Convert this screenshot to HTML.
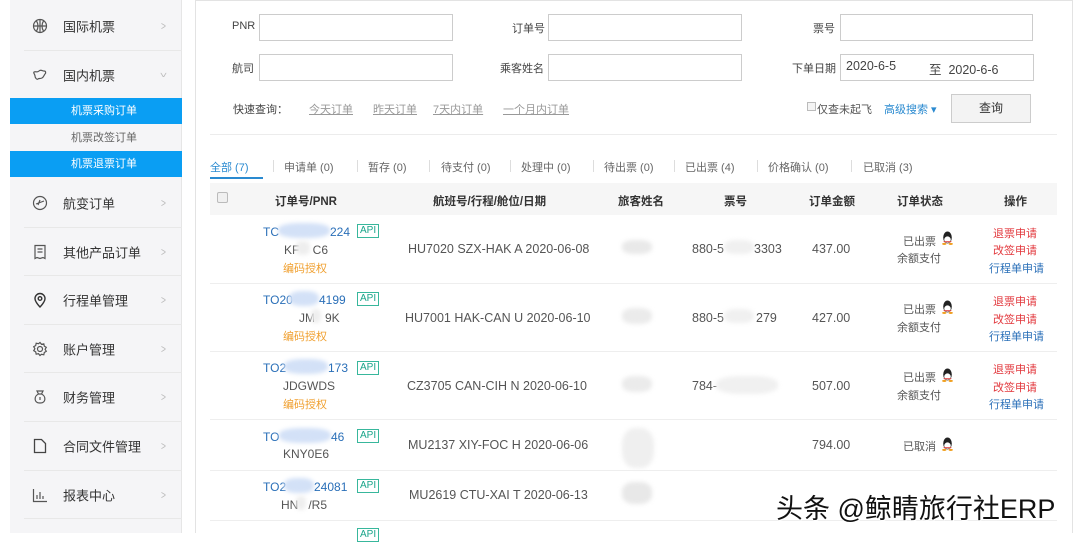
<!DOCTYPE html>
<html><head><meta charset="utf-8">
<style>
*{margin:0;padding:0;box-sizing:border-box}
body{width:1080px;height:533px;overflow:hidden;background:#fff;font-family:"Liberation Sans","Noto Sans CJK SC",sans-serif;font-size:12px;color:#555;position:relative}
.a{position:absolute;white-space:nowrap}
#side{position:absolute;left:10px;top:0;width:172px;height:533px;background:#f5f5f7;border-right:1px solid #e6e6e6}
.mi{position:absolute;left:0;width:172px;height:49px;font-size:13px;color:#333}
.mi .t{position:absolute;left:53px;top:50%;transform:translateY(-50%)}
.mi .ar{position:absolute;left:150px;top:50%;transform:translateY(-50%) scaleX(.7);color:#bbb;font-size:12px}
.mi svg{position:absolute;left:22px;top:50%;transform:translateY(-50%)}
.sep{position:absolute;left:14px;width:158px;height:1px;background:#e8e8e8}
.sub{position:absolute;left:0;width:172px;height:26px;line-height:26px;font-size:11px;color:#666;padding-left:61px}
.sub.on{background:#0a9ef3;color:#fff}
.inp{position:absolute;height:27px;border:1px solid #ccc;background:#fff}
.lb{position:absolute;font-size:11px;color:#444}
.ql{position:absolute;font-size:11px;color:#999;text-decoration:underline;top:101px}
.tab{position:absolute;top:159px;font-size:11px;color:#666}
.tsep{position:absolute;top:160px;width:1px;height:12px;background:#ddd}
.th{position:absolute;top:193px;font-size:11.5px;color:#333;font-weight:bold}
.hl{position:absolute;left:210px;width:847px;height:1px;background:#eee}
.api{position:absolute;font-size:10px;color:#1aa58a;border:1px solid #38b79c;padding:0 2px;line-height:12px}
.blue{color:#2a6fb8}
.or{color:#f0a030;font-size:11px}
.red{color:#e2383d;font-size:11px}
.lk{color:#2a6fb8;font-size:11px}
.blob{position:absolute;border-radius:40%;filter:blur(2px)}
.qq{position:absolute;width:11px;height:14px}
.r{font-size:12.5px}
</style></head><body>

<div id="side">
  <div class="mi" style="top:1px"><svg width="16" height="16" viewBox="0 0 16 16" fill="none" stroke="#555" stroke-width="1.2"><circle cx="8" cy="8" r="6.5"/><path d="M1.5 8h13M8 1.5v13M4.5 3c2 3 2 7 0 10M11.5 3c-2 3-2 7 0 10"/></svg><span class="t">国际机票</span><span class="ar">&gt;</span></div>
  <div class="sep" style="top:50px"></div>
  <div class="mi" style="top:50px"><svg width="16" height="16" viewBox="0 0 16 16" fill="none" stroke="#555" stroke-width="1.2"><path d="M2 5c2-1 3 1 5-1s3 0 5 0 2 2 1 3-1 3-3 4-3 0-4 1-3-1-3-3-2-3-1-4z"/></svg><span class="t">国内机票</span><span class="ar" style="transform:translateY(-50%) rotate(90deg) scaleX(.7)">&gt;</span></div>
  <div class="sub on" style="top:98px">机票采购订单</div>
  <div class="sub" style="top:125px">机票改签订单</div>
  <div class="sub on" style="top:151px">机票退票订单</div>
  <div class="mi" style="top:178px"><svg width="16" height="16" viewBox="0 0 16 16" fill="none" stroke="#555" stroke-width="1.2"><circle cx="8" cy="8" r="6.5"/><path d="M4 9l8-3M6 10l2-5"/></svg><span class="t">航变订单</span><span class="ar">&gt;</span></div>
  <div class="sep" style="top:227px"></div>
  <div class="mi" style="top:227px"><svg width="16" height="16" viewBox="0 0 16 16" fill="none" stroke="#555" stroke-width="1.2"><path d="M3 1.5h10v13l-2-1-3 1-3-1-2 1z"/><path d="M5.5 5h5M5.5 8h5"/></svg><span class="t">其他产品订单</span><span class="ar">&gt;</span></div>
  <div class="sep" style="top:275px"></div>
  <div class="mi" style="top:275px"><svg width="16" height="16" viewBox="0 0 16 16" fill="none" stroke="#333" stroke-width="1.4"><path d="M8 15s5-5 5-8.5a5 5 0 0 0-10 0C3 10 8 15 8 15z"/><circle cx="8" cy="6.5" r="1.8"/></svg><span class="t">行程单管理</span><span class="ar">&gt;</span></div>
  <div class="sep" style="top:324px"></div>
  <div class="mi" style="top:324px"><svg width="16" height="16" viewBox="0 0 16 16" fill="none" stroke="#555" stroke-width="1.2"><circle cx="8" cy="8" r="2.5"/><path d="M8 1.5l1.5 1.8 2.3-.5.5 2.3 2 1.2-1.2 2 1.2 2-2 1.2-.5 2.3-2.3-.5L8 14.5l-1.5-1.8-2.3.5-.5-2.3-2-1.2 1.2-2-1.2-2 2-1.2.5-2.3 2.3.5z"/></svg><span class="t">账户管理</span><span class="ar">&gt;</span></div>
  <div class="sep" style="top:372px"></div>
  <div class="mi" style="top:372px"><svg width="16" height="16" viewBox="0 0 16 16" fill="none" stroke="#555" stroke-width="1.2"><path d="M5 2h6l-1.5 3h-3zM6.5 5C2 7 1.5 14 8 14s6-7 1.5-9"/><path d="M8 8v3"/></svg><span class="t">财务管理</span><span class="ar">&gt;</span></div>
  <div class="sep" style="top:421px"></div>
  <div class="mi" style="top:421px"><svg width="16" height="16" viewBox="0 0 16 16" fill="none" stroke="#444" stroke-width="1.3"><path d="M2.5 1.5h7l4 4v9h-11z"/></svg><span class="t">合同文件管理</span><span class="ar">&gt;</span></div>
  <div class="sep" style="top:470px"></div>
  <div class="mi" style="top:470px"><svg width="16" height="16" viewBox="0 0 16 16" fill="none" stroke="#555" stroke-width="1.2"><path d="M1.5 2v12.5H15M5 12V8M8 12V5M11 12V9"/></svg><span class="t">报表中心</span><span class="ar">&gt;</span></div>
  <div class="sep" style="top:518px"></div>
</div>

<div class="a" style="left:195px;top:0;width:878px;height:533px;border-left:1px solid #e3e3e3;border-right:1px solid #e3e3e3;border-top:1px solid #e3e3e3"></div>

<div class="lb" style="left:232px;top:20px">PNR</div><div class="inp" style="left:259px;top:14px;width:194px"></div>
<div class="lb" style="left:512px;top:20px">订单号</div><div class="inp" style="left:548px;top:14px;width:194px"></div>
<div class="lb" style="left:813px;top:20px">票号</div><div class="inp" style="left:840px;top:14px;width:193px"></div>
<div class="lb" style="left:232px;top:60px">航司</div><div class="inp" style="left:259px;top:54px;width:194px"></div>
<div class="lb" style="left:500px;top:60px">乘客姓名</div><div class="inp" style="left:548px;top:54px;width:194px"></div>
<div class="lb" style="left:792px;top:60px">下单日期</div><div class="inp" style="left:840px;top:54px;width:194px"></div>
<div class="a" style="left:846px;top:59px;font-size:12.5px;color:#444">2020-6-5</div>
<div class="a" style="left:929px;top:59px;font-size:12.5px;color:#444">至&nbsp; 2020-6-6</div>
<div class="lb" style="left:233px;top:101px">快速查询：</div>
<div class="ql" style="left:309px">今天订单</div><div class="ql" style="left:373px">昨天订单</div><div class="ql" style="left:433px">7天内订单</div><div class="ql" style="left:503px">一个月内订单</div>
<div class="a" style="left:807px;top:102px;width:9px;height:9px;border:1px solid #bbb;background:#f4f4f4"></div>
<div class="lb" style="left:817px;top:101px;color:#555">仅查未起飞</div>
<div class="lb" style="left:884px;top:101px;color:#2a8ad0">高级搜索 ▾</div>
<div class="a" style="left:951px;top:94px;width:80px;height:29px;border:1px solid #ccc;background:#f3f3f3;text-align:center;line-height:27px;font-size:12px;color:#333">查询</div>
<div class="a" style="left:210px;top:134px;width:847px;height:1px;background:#ececec"></div>

<div class="tab" style="left:210px;color:#2a8ad0">全部 (7)</div>
<div class="a" style="left:210px;top:177px;width:53px;height:2px;background:#2a8ad0"></div>
<div class="tsep" style="left:273px"></div><div class="tab" style="left:284px">申请单 (0)</div>
<div class="tsep" style="left:357px"></div><div class="tab" style="left:368px">暂存 (0)</div>
<div class="tsep" style="left:429px"></div><div class="tab" style="left:441px">待支付 (0)</div>
<div class="tsep" style="left:510px"></div><div class="tab" style="left:521px">处理中 (0)</div>
<div class="tsep" style="left:593px"></div><div class="tab" style="left:604px">待出票 (0)</div>
<div class="tsep" style="left:674px"></div><div class="tab" style="left:685px">已出票 (4)</div>
<div class="tsep" style="left:757px"></div><div class="tab" style="left:768px">价格确认 (0)</div>
<div class="tsep" style="left:851px"></div><div class="tab" style="left:863px">已取消 (3)</div>

<div class="a" style="left:210px;top:183px;width:847px;height:32px;background:#f6f6f6"></div>
<div class="a" style="left:217px;top:192px;width:11px;height:11px;border:1px solid #bbb;border-radius:2px;background:#f0f0f0"></div>
<div class="th" style="left:275px">订单号/PNR</div>
<div class="th" style="left:433px">航班号/行程/舱位/日期</div>
<div class="th" style="left:618px">旅客姓名</div>
<div class="th" style="left:724px">票号</div>
<div class="th" style="left:809px">订单金额</div>
<div class="th" style="left:897px">订单状态</div>
<div class="th" style="left:1004px">操作</div>

<div class="hl" style="top:283px"></div><div class="hl" style="top:351px"></div><div class="hl" style="top:419px"></div><div class="hl" style="top:470px"></div><div class="hl" style="top:520px"></div>

<div class="a blue" style="left:263px;top:225px">TC</div><div class="blob" style="left:278px;top:223px;width:52px;height:15px;background:#d3e1f7"></div><div class="a blue" style="left:330px;top:225px">224</div>
<div class="api" style="left:357px;top:224px">API</div>
<div class="a" style="left:284px;top:243px">KF&nbsp;&nbsp;&nbsp;&nbsp;C6</div><div class="blob" style="left:296px;top:241px;width:14px;height:14px;background:#eee"></div>
<div class="a or" style="left:283px;top:260px">编码授权</div>
<div class="a r" style="left:408px;top:242px">HU7020 SZX-HAK A 2020-06-08</div>
<div class="blob" style="left:622px;top:240px;width:30px;height:14px;background:#e9e9e9"></div>
<div class="a r" style="left:692px;top:242px">880-5</div><div class="blob" style="left:724px;top:240px;width:30px;height:14px;background:#f0f0f0"></div><div class="a r" style="left:754px;top:242px">3303</div>
<div class="a r" style="left:812px;top:242px">437.00</div>
<div class="a" style="left:903px;top:233px;font-size:11px">已出票</div>
<div class="a" style="left:897px;top:250px;font-size:11px">余额支付</div>
<div class="a red" style="left:993px;top:225px">退票申请</div><div class="a red" style="left:993px;top:242px">改签申请</div><div class="a lk" style="left:989px;top:260px">行程单申请</div>

<div class="a blue" style="left:263px;top:293px">TO20</div><div class="blob" style="left:289px;top:291px;width:30px;height:15px;background:#d3e1f7"></div><div class="a blue" style="left:319px;top:293px">4199</div>
<div class="api" style="left:357px;top:292px">API</div>
<div class="a" style="left:299px;top:311px">JM&nbsp;&nbsp;&nbsp;9K</div><div class="blob" style="left:311px;top:309px;width:10px;height:14px;background:#eee"></div>
<div class="a or" style="left:283px;top:328px">编码授权</div>
<div class="a r" style="left:405px;top:311px">HU7001 HAK-CAN U 2020-06-10</div>
<div class="blob" style="left:622px;top:308px;width:30px;height:16px;background:#ebebeb"></div>
<div class="a r" style="left:692px;top:311px">880-5</div><div class="blob" style="left:724px;top:309px;width:30px;height:14px;background:#f0f0f0"></div><div class="a r" style="left:756px;top:311px">279</div>
<div class="a r" style="left:812px;top:311px">427.00</div>
<div class="a" style="left:903px;top:301px;font-size:11px">已出票</div>
<div class="a" style="left:897px;top:319px;font-size:11px">余额支付</div>
<div class="a red" style="left:993px;top:293px">退票申请</div><div class="a red" style="left:993px;top:311px">改签申请</div><div class="a lk" style="left:989px;top:328px">行程单申请</div>

<div class="a blue" style="left:263px;top:361px">TO2</div><div class="blob" style="left:284px;top:359px;width:44px;height:15px;background:#d3e1f7"></div><div class="a blue" style="left:328px;top:361px">173</div>
<div class="api" style="left:357px;top:361px">API</div>
<div class="a" style="left:283px;top:379px">JDGWDS</div>
<div class="a or" style="left:283px;top:396px">编码授权</div>
<div class="a r" style="left:407px;top:379px">CZ3705 CAN-CIH N 2020-06-10</div>
<div class="blob" style="left:622px;top:376px;width:30px;height:16px;background:#ebebeb"></div>
<div class="a r" style="left:692px;top:379px">784-</div><div class="blob" style="left:716px;top:376px;width:62px;height:18px;background:#f0f0f0"></div>
<div class="a r" style="left:812px;top:379px">507.00</div>
<div class="a" style="left:903px;top:369px;font-size:11px">已出票</div>
<div class="a" style="left:897px;top:387px;font-size:11px">余额支付</div>
<div class="a red" style="left:993px;top:361px">退票申请</div><div class="a red" style="left:993px;top:379px">改签申请</div><div class="a lk" style="left:989px;top:396px">行程单申请</div>

<div class="a blue" style="left:263px;top:430px">TO</div><div class="blob" style="left:279px;top:428px;width:52px;height:15px;background:#d3e1f7"></div><div class="a blue" style="left:331px;top:430px">46</div>
<div class="api" style="left:357px;top:429px">API</div>
<div class="a" style="left:283px;top:447px">KNY0E6</div>
<div class="a r" style="left:408px;top:438px">MU2137 XIY-FOC H 2020-06-06</div>
<div class="blob" style="left:622px;top:428px;width:32px;height:40px;background:#efefef"></div>
<div class="a r" style="left:812px;top:438px">794.00</div>
<div class="a" style="left:903px;top:438px;font-size:11px">已取消</div>

<div class="a blue" style="left:263px;top:480px">TO2</div><div class="blob" style="left:284px;top:478px;width:30px;height:15px;background:#d3e1f7"></div><div class="a blue" style="left:314px;top:480px">24081</div>
<div class="api" style="left:357px;top:479px">API</div>
<div class="a" style="left:281px;top:498px">HN&nbsp;&nbsp;&nbsp;/R5</div><div class="blob" style="left:296px;top:496px;width:10px;height:14px;background:#eee"></div>
<div class="a r" style="left:409px;top:488px">MU2619 CTU-XAI T 2020-06-13</div>
<div class="blob" style="left:622px;top:482px;width:30px;height:22px;background:#e8e8e8"></div>
<div class="api" style="left:357px;top:528px">API</div>

<svg class="qq" style="left:942px;top:231px" viewBox="0 0 10 13"><ellipse cx="5" cy="6" rx="4" ry="5.5" fill="#222"/><ellipse cx="5" cy="8" rx="3" ry="3" fill="#fff"/><path d="M1 9.5h8l-1 1H2z" fill="#d33"/><ellipse cx="2" cy="12" rx="2" ry="1" fill="#f0a020"/><ellipse cx="8" cy="12" rx="2" ry="1" fill="#f0a020"/></svg>
<svg class="qq" style="left:942px;top:300px" viewBox="0 0 10 13"><ellipse cx="5" cy="6" rx="4" ry="5.5" fill="#222"/><ellipse cx="5" cy="8" rx="3" ry="3" fill="#fff"/><path d="M1 9.5h8l-1 1H2z" fill="#d33"/><ellipse cx="2" cy="12" rx="2" ry="1" fill="#f0a020"/><ellipse cx="8" cy="12" rx="2" ry="1" fill="#f0a020"/></svg>
<svg class="qq" style="left:942px;top:368px" viewBox="0 0 10 13"><ellipse cx="5" cy="6" rx="4" ry="5.5" fill="#222"/><ellipse cx="5" cy="8" rx="3" ry="3" fill="#fff"/><path d="M1 9.5h8l-1 1H2z" fill="#d33"/><ellipse cx="2" cy="12" rx="2" ry="1" fill="#f0a020"/><ellipse cx="8" cy="12" rx="2" ry="1" fill="#f0a020"/></svg>
<svg class="qq" style="left:942px;top:437px" viewBox="0 0 10 13"><ellipse cx="5" cy="6" rx="4" ry="5.5" fill="#222"/><ellipse cx="5" cy="8" rx="3" ry="3" fill="#fff"/><path d="M1 9.5h8l-1 1H2z" fill="#d33"/><ellipse cx="2" cy="12" rx="2" ry="1" fill="#f0a020"/><ellipse cx="8" cy="12" rx="2" ry="1" fill="#f0a020"/></svg>

<div class="a" style="left:776px;top:487px;font-size:27px;color:#111;text-shadow:0 0 2px #fff,0 0 2px #fff,1px 1px 0 #fff,-1px -1px 0 #fff">头条 @鲸睛旅行社ERP</div>
</body></html>
